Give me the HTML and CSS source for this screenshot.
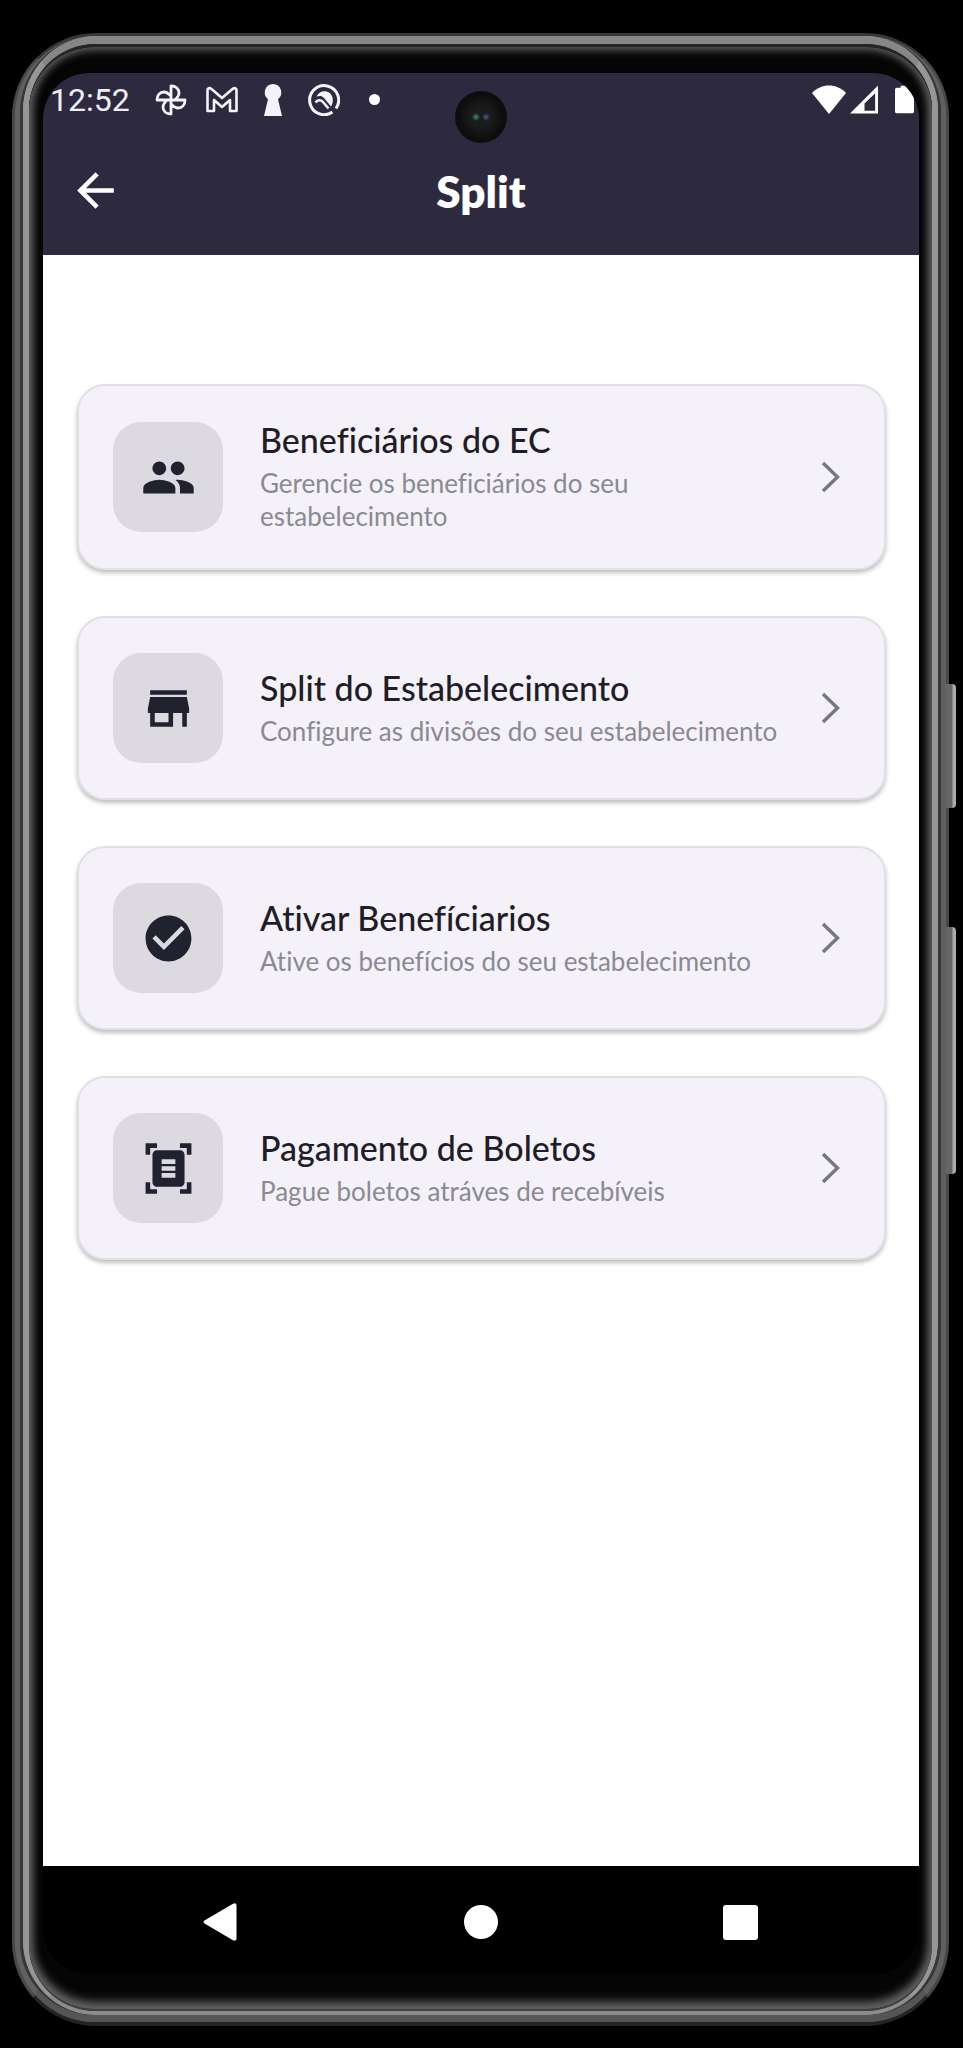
FILE: index.html
```html
<!DOCTYPE html>
<html lang="pt-BR">
<head>
<meta charset="utf-8">
<meta name="viewport" content="width=device-width, initial-scale=1">
<title>Split</title>
<link rel="stylesheet" href="styles.css">
</head>
<body>
<div class="phone">
  <span class="side-key side-key-power"></span>
  <span class="side-key side-key-volume"></span>
  <div class="band">
    <div class="groove">
      <div class="rim">
        <div class="bezel">
          <div class="screen">
            <header class="top">
              <div class="status">
                <span class="clock">12:52</span>
                <div class="notices">
                  <svg class="status-icon" viewBox="0 0 32 32" fill="none" stroke="currentColor" stroke-width="2.8" stroke-linejoin="round"><path d="M16 16V2c5 0 8 3 8 7 0 3-2 5-4 7M16 16h14c0 5-3 8-7 8-3 0-5-2-7-4M16 16v14c-5 0-8-3-8-7 0-3 2-5 4-7M16 16H2c0-5 3-8 7-8 3 0 5 2 7 4"/></svg>
                  <svg class="status-icon" viewBox="0 0 32 32" fill="none" stroke="currentColor" stroke-width="2.6" stroke-linejoin="round"><path d="M1.500 27V6c0-2 2-2.500 4-1L16 14 26.500 5c2-1.500 4-1 4 1v21H24V16l-8 7-8-7v11z"/></svg>
                  <svg class="status-icon" viewBox="0 0 32 32" fill="currentColor"><path d="M16 0a8.500 8.500 0 0 1 5 15.200L25 32H7l4-16.800A8.500 8.500 0 0 1 16 0z"/></svg>
                  <svg class="status-icon" viewBox="0 0 32 32" fill="none" stroke="currentColor" stroke-width="3"><path d="M24.500 28A14.500 14.500 0 1 1 28 24.500"/><path d="M8.500 12.500C12 5.500 22 5.500 24.500 13.500c.8 3.500 0 6.500-1.500 9L16 14c-2-2.500-4.500-2.500-7.500-1.500z" fill="currentColor" stroke="none"/><path d="M7.500 18.500c2-3 5.500-3 7.500-.5l5.500 6.500" stroke-width="2.600"/></svg>
                  <span class="dot"></span>
                </div>
                <div class="signals">
                  <svg class="wifi" viewBox="0 0 34 30" fill="currentColor"><path d="M0 8C9-2 25-2 34 8L17 29z"/></svg>
                  <svg class="cell" viewBox="0 0 30 30" fill="currentColor"><path fill-rule="evenodd" d="M29 0v29H0zM26 8L15 18.500V26h11z"/></svg>
                  <svg class="battery" viewBox="0 0 20 30" fill="currentColor"><path d="M0 4q0-2 2-2h4V0h6q8 6 8 14v13q0 2-2 2H2q-2 0-2-2z"/></svg>
                </div>
              </div>
              <div class="app-bar">
                <button class="back" type="button" aria-label="Voltar">
                  <svg class="icon" viewBox="0 0 24 24" fill="currentColor"><path d="M20 11H7.830l5.590-5.590L12 4l-8 8 8 8 1.410-1.410L7.830 13H20z"/></svg>
                </button>
                <h1 class="title">Split</h1>
              </div>
            </header>
            <span class="camera"></span>
            <main class="menu">
              <a class="card" href="#beneficiarios">
                <span class="tile"><svg class="icon" viewBox="0 0 24 24" fill="currentColor"><path d="M16 11c1.660 0 2.990-1.340 2.990-3S17.660 5 16 5s-3 1.340-3 3 1.340 3 3 3zm-8 0c1.660 0 2.990-1.340 2.990-3S9.660 5 8 5 5 6.340 5 8s1.340 3 3 3zm0 2c-2.330 0-7 1.170-7 3.500V19h14v-2.500C15 14.170 10.330 13 8 13zm8 0c-.29 0-.62.02-.97.05 1.160.84 1.970 1.970 1.970 3.450V19h6v-2.500c0-2.330-4.670-3.500-7-3.500z"/></svg></span>
                <span class="text"><span class="name">Beneficiários do EC</span><span class="note">Gerencie os beneficiários do seu estabelecimento</span></span>
                <svg class="chevron" viewBox="0 0 20 32" fill="none" stroke="currentColor" stroke-width="3.400"><path d="M2 2l14.500 14L2 30"/></svg>
              </a>
              <a class="card" href="#estabelecimento">
                <span class="tile"><svg class="icon" viewBox="0 0 24 24" fill="currentColor"><path d="M20 4H4v2h16V4zm1 10v-2l-1-5H4l-1 5v2h1v6h10v-6h4v6h2v-6h1zm-9 4H6v-4h6v4z"/></svg></span>
                <span class="text"><span class="name">Split do Estabelecimento</span><span class="note">Configure as divisões do seu estabelecimento</span></span>
                <svg class="chevron" viewBox="0 0 20 32" fill="none" stroke="currentColor" stroke-width="3.400"><path d="M2 2l14.500 14L2 30"/></svg>
              </a>
              <a class="card" href="#ativar">
                <span class="tile"><svg class="icon" viewBox="0 0 24 24" fill="currentColor"><path d="M12 2C6.480 2 2 6.480 2 12s4.480 10 10 10 10-4.480 10-10S17.520 2 12 2zm-2 15l-5-5 1.410-1.410L10 14.170l7.590-7.590L19 8l-9 9z"/></svg></span>
                <span class="text"><span class="name">Ativar Benefíciarios</span><span class="note">Ative os benefícios do seu estabelecimento</span></span>
                <svg class="chevron" viewBox="0 0 20 32" fill="none" stroke="currentColor" stroke-width="3.400"><path d="M2 2l14.500 14L2 30"/></svg>
              </a>
              <a class="card" href="#boletos">
                <span class="tile"><svg class="icon" viewBox="0 0 24 24" fill="currentColor"><path fill-rule="evenodd" d="M7 3H4v3H2V1h5v2zm15 3V1h-5v2h3v3h2zM7 21H4v-3H2v5h5v-2zm13-3v3h-3v2h5v-5h-2zm-1 0c0 1.100-.9 2-2 2H7c-1.100 0-2-.9-2-2V6c0-1.100.9-2 2-2h10c1.100 0 2 .9 2 2v12zM15 8H9v2h6V8zm0 3H9v2h6v-2zm0 3H9v2h6v-2z"/></svg></span>
                <span class="text"><span class="name">Pagamento de Boletos</span><span class="note">Pague boletos atráves de recebíveis</span></span>
                <svg class="chevron" viewBox="0 0 20 32" fill="none" stroke="currentColor" stroke-width="3.400"><path d="M2 2l14.500 14L2 30"/></svg>
              </a>
            </main>
            <nav class="system-nav">
              <button class="nav-key" type="button" aria-label="Voltar"><svg class="nav-icon" viewBox="0 0 38 38" fill="currentColor"><path d="M2.500 17.500L31 .8q3.500-1.500 3.500 2v32.400q0 3.500-3.500 2L2.500 20.500q-2-1.500 0-3z"/></svg></button>
              <button class="nav-key" type="button" aria-label="Início"><svg class="nav-icon" viewBox="0 0 38 38" fill="currentColor"><circle cx="19" cy="19" r="17"/></svg></button>
              <button class="nav-key" type="button" aria-label="Recentes"><svg class="nav-icon" viewBox="0 0 38 38" fill="currentColor"><rect x="1" y="2" width="35" height="35" rx="3"/></svg></button>
            </nav>
          </div>
        </div>
      </div>
    </div>
  </div>
</div>
</body>
</html>
```
FILE: styles.css
```css
* { box-sizing: border-box; }

body {
  margin: 0;
  min-height: 100vh;
  padding: 33px 14px 22px 12px;
  display: flex;
  background: #000;
  font-family: Lato, "Liberation Sans", sans-serif;
  font-variant-ligatures: none;
}

/* Metal frame, from the outer edge inwards */
.phone, .band, .groove, .rim, .bezel, .screen {
  flex: 1;
  min-width: 0;
  display: flex;
  border-style: solid;
}
.phone {
  position: relative;
  border-width: 3px 3px 4px;
  border-color: #363636 #484848 #242424;
  border-radius: 84px;
  background: #5c5c5c;
}
.band {
  border-width: 0 5px 7px;
  border-color: #5c5c5c #606060 #555;
  border-radius: 80px;
  background: #333;
}
.groove {
  border-width: 0 3px;
  border-color: #383838;
  border-radius: 76px;
  background: #929292;
}
.rim {
  border-width: 8px 6px 4px;
  border-color: #868686 #969696 #8c8c8c;
  border-radius: 74px;
  background: #2a2a2a;
}
.bezel {
  border-width: 3px 0 2px;
  border-color: #262626 #2a2a2a #404040;
  border-radius: 66px;
  padding: 26px 13px 35px 14px;
  background: #050505;
  box-shadow: inset 0 0 8px 3px #606060, inset 0 -6px 12px #666;
}
.side-key {
  position: absolute;
  left: 100%;
  width: 10px;
  border-radius: 0 4px 4px 0;
  background: linear-gradient(90deg, #666 55%, #aaa 75%);
}
.side-key-power { top: 648px; height: 124px; }
.side-key-volume { top: 891px; height: 247px; }

.screen {
  position: relative;
  flex-direction: column;
  border-width: 0;
  border-radius: 46px;
  overflow: hidden;
  background: #000;
}
.camera {
  position: absolute;
  top: 18px;
  left: 50%;
  width: 52px;
  height: 52px;
  margin-left: -26px;
  border-radius: 50%;
  background:
    radial-gradient(circle at 21px 26px, #2f7a68 1px, transparent 4px),
    radial-gradient(circle at 31px 26px, #454b78 1px, transparent 4px),
    radial-gradient(circle, #1a1c1c 10px, #0d0d0d 22px);
}

.top {
  background: #2d2a40;
  color: #fff;
}
.status {
  display: flex;
  align-items: center;
  height: 53px;
  padding: 0 5px 0 7px;
}
.clock {
  font: 400 32px/40px Roboto, sans-serif;
  color: #f0eff8;
}
.notices {
  display: flex;
  align-items: center;
  gap: 19px;
  margin-left: 25px;
}
.status-icon { width: 32px; height: 32px; color: #f4f3fb; }
.dot {
  width: 11px;
  height: 11px;
  margin-left: 10px;
  border-radius: 50%;
  background: #fff;
}
.signals {
  display: flex;
  align-items: center;
  gap: 4px;
  margin-left: auto;
}
.wifi { width: 34px; height: 30px; }
.cell { width: 29px; height: 30px; }
.battery { width: 19px; height: 30px; margin-left: 12px; }

.app-bar {
  display: grid;
  grid-template-columns: 56px 1fr 56px;
  align-items: center;
  height: 129px;
  padding: 0 24px;
}
.back, .nav-key {
  display: flex;
  align-items: center;
  justify-content: center;
  padding: 0;
  border: 0;
  background: none;
  color: #fff;
  cursor: pointer;
}
.icon { display: block; width: 55px; height: 55px; }
.title {
  margin: 0;
  text-align: center;
  font-size: 44px;
  font-weight: 800;
  line-height: 56px;
}

.menu {
  flex: 1;
  display: flex;
  flex-direction: column;
  gap: 46px;
  padding: 129px 33px 46px 34px;
  background: #fff;
}
.card {
  display: flex;
  align-items: center;
  gap: 37px;
  padding: 35px 43px 35px 34px;
  border: 2px solid #e2e0e6;
  border-radius: 28px;
  background: #f4f1f9;
  box-shadow: 0 3px 4px rgba(0, 0, 0, .25);
  color: #1f1d28;
  text-decoration: none;
}
.tile {
  flex: none;
  display: grid;
  place-items: center;
  width: 110px;
  height: 110px;
  border-radius: 28px;
  background: #dcd9e1;
  color: #20222f;
}
.text {
  flex: 1;
  min-width: 0;
}
.name, .note { display: block; }
.name {
  margin-bottom: 8px;
  font-size: 34px;
  font-weight: 500;
  line-height: 38px;
}
.note {
  color: #8b8992;
  font-size: 26px;
  line-height: 33px;
}
.chevron {
  flex: none;
  width: 20px;
  height: 32px;
  color: #77757e;
}

.system-nav {
  display: flex;
  height: 108px;
  padding: 4px 48px 0;
  background: #000;
}
.nav-key { flex: 1; }
.nav-icon { width: 38px; height: 38px; }
```
